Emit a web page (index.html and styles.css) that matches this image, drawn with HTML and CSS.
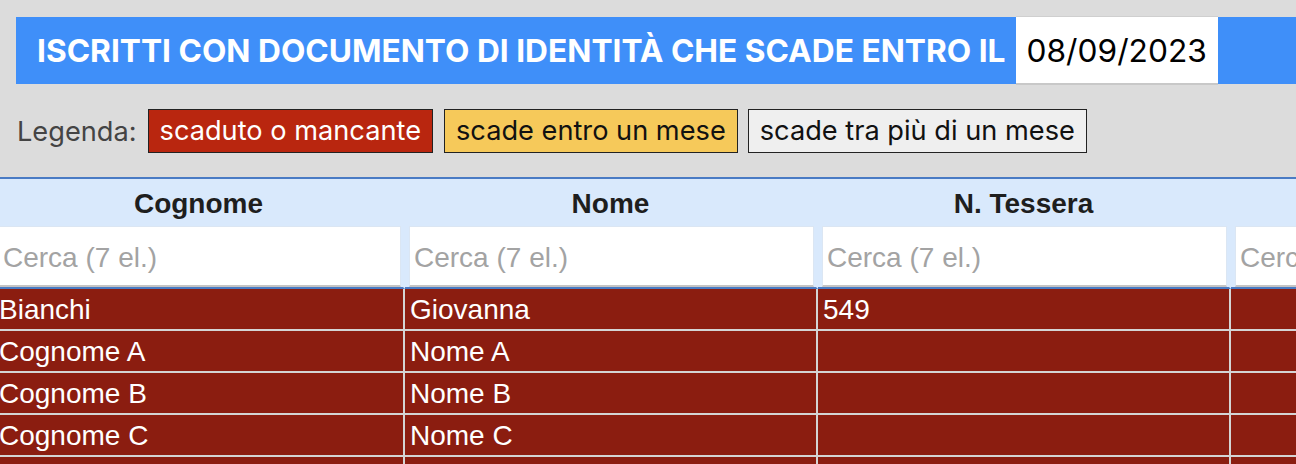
FILE: index.html
```html
<!DOCTYPE html>
<html lang="it">
<head>
<meta charset="utf-8">
<title>Iscritti - documenti in scadenza</title>
<link rel="stylesheet" href="styles.css">
</head>
<body>
<div class="page">
  <div class="topbar">
    <h1 class="title">ISCRITTI CON DOCUMENTO DI IDENTITÀ CHE SCADE ENTRO IL</h1>
    <input class="date" type="text" value="08/09/2023">
  </div>
  <div class="legend">
    <span class="legend-label">Legenda:</span>
    <span class="chip chip-red">scaduto o mancante</span>
    <span class="chip chip-yellow">scade entro un mese</span>
    <span class="chip chip-gray">scade tra più di un mese</span>
  </div>
  <div class="table-wrap">
    <table class="grid">
      <colgroup>
        <col class="c1"><col class="c2"><col class="c3"><col class="c4">
      </colgroup>
      <thead>
        <tr class="head">
          <th>Cognome</th><th>Nome</th><th>N. Tessera</th><th>Scadenza</th>
        </tr>
        <tr class="search">
          <td><input class="filter" type="text" placeholder="Cerca (7 el.)"></td>
          <td><input class="filter" type="text" placeholder="Cerca (7 el.)"></td>
          <td><input class="filter" type="text" placeholder="Cerca (7 el.)"></td>
          <td><input class="filter" type="text" placeholder="Cerca (7 el.)"></td>
        </tr>
      </thead>
      <tbody>
        <tr class="expired"><td>Bianchi</td><td>Giovanna</td><td>549</td><td></td></tr>
        <tr class="expired"><td>Cognome A</td><td>Nome A</td><td></td><td></td></tr>
        <tr class="expired"><td>Cognome B</td><td>Nome B</td><td></td><td></td></tr>
        <tr class="expired"><td>Cognome C</td><td>Nome C</td><td></td><td></td></tr>
        <tr class="expired"><td>Cognome D</td><td>Nome D</td><td></td><td></td></tr>
        <tr class="expired"><td>Cognome E</td><td>Nome E</td><td></td><td></td></tr>
        <tr class="expired"><td>Cognome F</td><td>Nome F</td><td></td><td></td></tr>
      </tbody>
    </table>
  </div>
</div>
</body>
</html>
```

FILE: styles.css
```css
html, body {
  margin: 0;
  padding: 0;
  overflow: hidden;
  background: #dcdcdc;
}

.page {
  font-family: Inter, "Noto Sans", sans-serif;
  padding-top: 17px;
}

.topbar {
  display: flex;
  align-items: center;
  margin-left: 16px;
  height: 67px;
  background: #3f8ff9;
}

.title {
  margin: 0 10px 0 0;
  padding-left: 21px;
  color: #ffffff;
  font-size: 31.7px;
  font-weight: 700;
  white-space: nowrap;
}

.date {
  box-sizing: border-box;
  width: 202px;
  height: 69px;
  margin: 0;
  padding: 0 0 0 11px;
  border: 0;
  border-top: 1px solid #cfcfcf;
  border-bottom: 2px solid #c8c8c8;
  background: #ffffff;
  color: #000000;
  font-family: Inter, "Noto Sans", sans-serif;
  font-size: 31.7px;
  outline: none;
}

.legend {
  display: flex;
  align-items: center;
  gap: 11px;
  margin-top: 25px;
  padding-left: 17px;
  font-size: 27.2px;
}

.legend-label {
  color: #444444;
}

.chip {
  box-sizing: border-box;
  height: 44px;
  line-height: 42px;
  padding: 0 11px;
  border: 1px solid #222222;
  white-space: nowrap;
}

.chip-red { background: #b9260f; color: #ffffff; }
.chip-yellow { background: #f6c95a; color: #111111; }
.chip-gray { background: #efefef; color: #111111; margin-left: -1px; }

.table-wrap {
  margin-top: 24px;
  overflow: hidden;
}

.grid {
  margin-left: -6px;
  table-layout: fixed;
  border-collapse: separate;
  border-spacing: 0;
  border-top: 2px solid #4a7bc4;
  width: 1652px;
  font-family: "Liberation Sans", Arial, sans-serif;
  font-size: 28px;
}

.c1 { width: 411px; }
.c2 { width: 413px; }
.c3 { width: 413px; }
.c4 { width: 415px; }

.grid th,
.grid td {
  box-sizing: border-box;
  border-right: 2px solid transparent;
}

.head th {
  height: 47px;
  padding: 2px 0 0;
  background: #d9e9fc;
  border-right-color: #d9e9fc;
  color: #1e1e1e;
  font-weight: 700;
  text-align: center;
  vertical-align: middle;
}

.search td {
  padding: 0 2px 0 4px;
  background: #d9e9fc;
  border-right-color: #d9e9fc;
  border-bottom: 2px solid #4a7bc4;
}

.filter {
  display: block;
  box-sizing: border-box;
  width: 100%;
  height: 61px;
  margin: 0;
  padding: 4px 0 0 4px;
  border: 1px solid #dbe6f3;
  border-bottom: 2px solid #c4c4c4;
  background: #ffffff;
  font-family: "Liberation Sans", Arial, sans-serif;
  font-size: 28px;
  color: #222222;
  outline: none;
}

.filter::placeholder {
  color: #a3a3a3;
}

.grid tbody td {
  height: 42px;
  padding: 5px 5px 0;
  line-height: 32px;
  white-space: nowrap;
  overflow: hidden;
  vertical-align: top;
  border-right-color: #d4d4d4;
  border-bottom: 2px solid #d4d4d4;
}

.expired td {
  background: #8b1d10;
  color: #ffffff;
}
```
